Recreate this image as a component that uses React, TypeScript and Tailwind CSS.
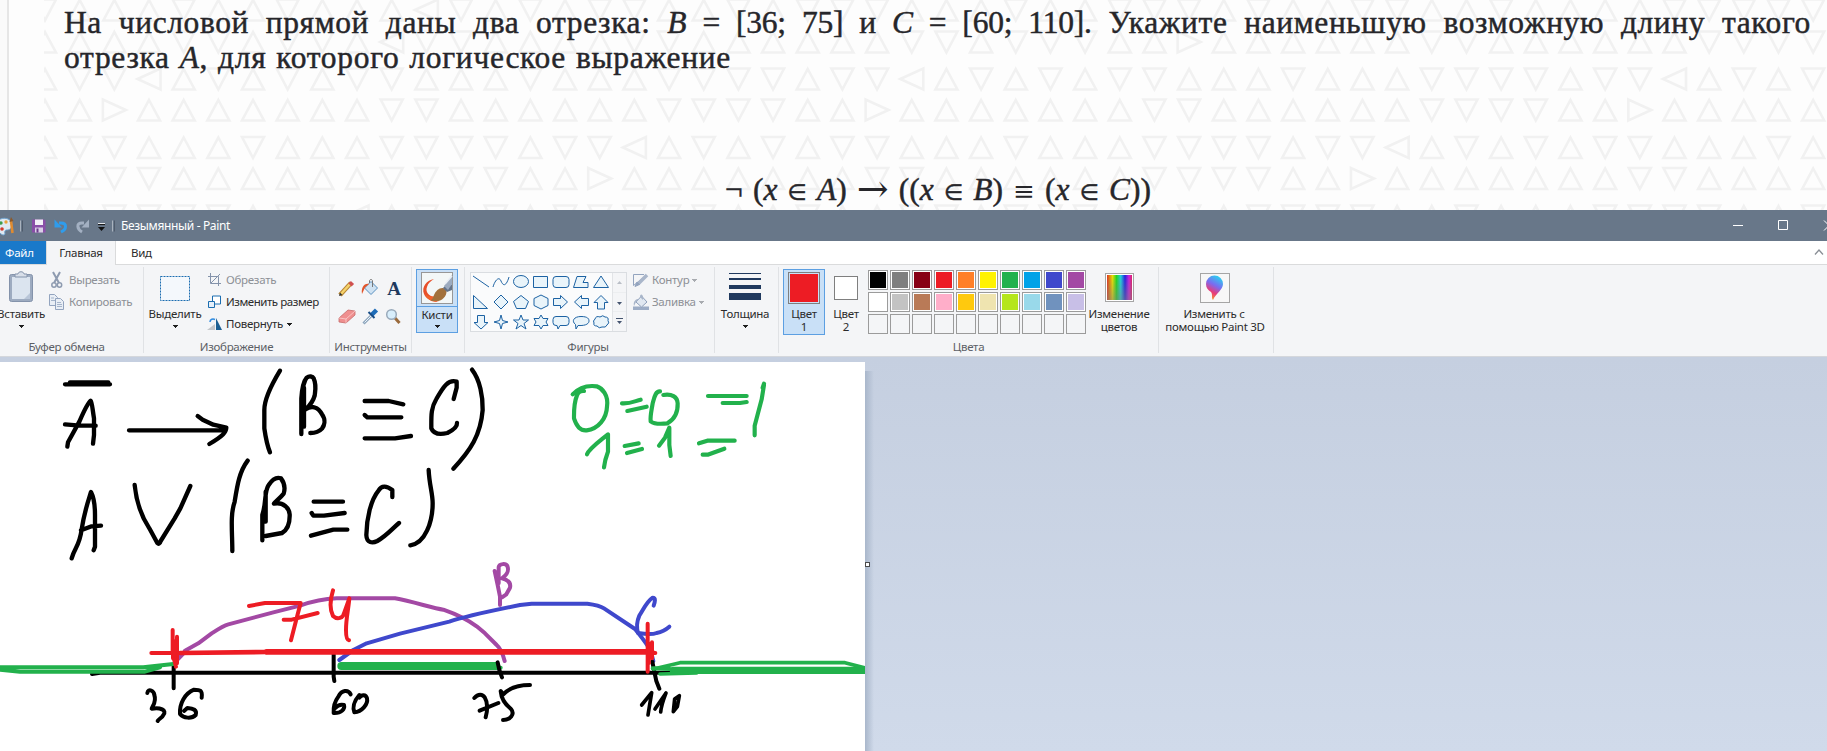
import React from 'react';

const ROWS: { y: number; cells: string }[] = [
  { y: 10, cells: 'duuuduuduuuldududd' + 'uududdduuuduuddd' + 'uduudduuduuuudddd'.slice(0, 17) + 'd' },
  { y: 42, cells: 'uuuuddudduldduuuu' + 'dduuuuuudduddduur' + 'uuuuuudduuuuuudddd' },
  { y: 79, cells: 'uddludududdduuduu'.replace('ddduuduu', 'dduuuduu') + 'udddduddludududdu' + 'uuduuudddduddludud' },
  { y: 110, cells: 'uuruuuuuuudduuuuu' + 'udddduuruuuuuuudd' + 'uuuuuudddduuruuuuu' },
  { y: 147.5, cells: 'udduuuduuuddddudd' + 'ludududduuuduuudd' + 'dduddludududduuudu' },
  { y: 178.5, cells: 'uudduuuuuudddduur' + 'uuuuuuudduuuuuudd' + 'dduuruuuuuuudduuuu' },
  { y: 216, cells: 'uudddduddludududd' + 'ddduuduudduddduud' + 'udddduuduuudddduud' },
];

const TRI: Record<string, string> = {
  u: 'M0 -10L11 10.5H-11Z',
  d: 'M0 10.5L11 -10.5H-11Z',
  l: 'M-11.5 0L11.5 -10.5V10.5Z',
  r: 'M11.5 0L-11.5 -10.5V10.5Z',
};

function Watermark() {
  return (
    <svg className="absolute left-[44px] top-0" width="1783" height="210" viewBox="44 0 1783 210">
      <g fill="none" stroke="#f1f1f1" strokeWidth="2.600">
        {ROWS.map((row) =>
          row.cells.split('').map((c, i) => (
            <path key={`${row.y}-${i}`} d={TRI[c]} transform={`translate(${45 + i * 34.67} ${row.y})`} />
          )),
        )}
      </g>
    </svg>
  );
}

function In() {
  return <span className="font-['DejaVu_Sans',sans-serif] text-[22px] leading-[0]">∈</span>;
}

function Task() {
  return (
    <section className="relative h-[210px] w-full overflow-hidden bg-[#fdfdfd]">
      <div className="absolute left-0 top-0 h-full w-[9px] border-r-2 border-[#e6e6e6] bg-[#fafafa]" />
      <Watermark />
      <div className="relative pl-[64px] pt-[6px] font-['Liberation_Serif',serif] text-[31.5px] leading-[34px] text-[#26262a] [-webkit-text-stroke:0.45px_#26262a]">
        <p className="w-[1747px] whitespace-nowrap tracking-[0.6px] [text-align-last:justify]">
          На числовой прямой даны два отрезка: <span className="tracking-[-0.2px]"><i>B</i> = [36; 75] и <i>C</i> = [60; 110].</span> Укажите наименьшую возможную длину такого
        </p>
        <p className="mt-px w-[667px] whitespace-nowrap tracking-[0.7px] [text-align-last:justify]">
          отрезка <i>A</i>, для которого логическое выражение
        </p>
        <p className="ml-[661px] mt-[98px] h-[34px] w-[426px] whitespace-nowrap [text-align-last:justify]">
          ¬ (<i>x</i> <In /> <i>A</i>) <span className="align-[-2px] font-['DejaVu_Serif',serif] text-[38px] leading-[0] [-webkit-text-stroke:0]">→</span> ((<i>x</i> <In /> <i>B</i>) <span className="font-['DejaVu_Serif',serif] text-[26px] leading-[0] [-webkit-text-stroke:0]">≡</span> (<i>x</i> <In /> <i>C</i>))
        </p>
      </div>
    </section>
  );
}

function TitleBar() {
  return (
    <header className="flex h-[31px] w-full bg-[#687789]">
      <svg width="117" height="31" viewBox="0 0 117 31">
        <path d="M-3 15C-3 9 3 7 8 9c4 2 5 6 3 9-2 3-5 1-6 3-1 2 1 3-1 4-4 0-7-5-7-10Z" fill="#dfe9f2" stroke="#6fa3cf" />
        <circle cx="1" cy="13" r="1.7" fill="#3e9c4a" />
        <circle cx="6" cy="12" r="1.7" fill="#e8a33b" />
        <circle cx="2" cy="19" r="1.8" fill="#d33b2c" />
        <path d="M11 11L12.5 23" stroke="#e08b30" strokeWidth="2.6" />
        <path d="M9.500 12L11 7l2.500 4Z" fill="#8d5a2a" />
        <path d="M20.500 10.500V21.500M112.500 10.500V21.500" stroke="#a9b2bd" />
        <path d="M22.500 10.500V21.500M114.500 10.500V21.500" stroke="#4f5b6b" />
        <path d="M32 9.500h12l1.500 1V22.500H32Z" fill="#8a4fa8" />
        <path d="M35 9.500h8v5.500h-8Z" fill="#f4f1f8" />
        <path d="M35 17.500h8v5h-8Z" fill="#d9cfe6" />
        <path d="M36.500 18.500h2v4h-2Z" fill="#6c3b8c" />
        <path d="M59 13h2c6 0 6 6 0 9" fill="none" stroke="#2f9ceb" strokeWidth="3" />
        <path d="M54.500 9.500V17.500H62Z" fill="#2f9ceb" />
        <path d="M84 13h-2c-6 0-5 6 0 9" fill="none" stroke="#a3b0c2" strokeWidth="3" />
        <path d="M89 9.500V17.500H81.500Z" fill="#a3b0c2" />
        <path d="M98 14.500h7" stroke="#1b1b1b" strokeWidth="1.200" />
        <path d="M98 13.500h7" stroke="#e4e7eb" />
        <path d="M98 17h7l-3.500 4Z" fill="#111" />
      </svg>
      <span className="ml-[4px] pt-[6px] text-[12px] leading-[20px] tracking-[-0.35px] text-white">Безымянный - Paint</span>
      <svg className="ml-auto" width="94" height="31" viewBox="1733 0 94 31" fill="none" stroke="#fff">
        <path d="M1733 15.500h10" />
        <path d="M1778.500 10.500h9v9h-9Z" />
        <path d="M1824 10.500l10 10M1824 20.500l10-10" />
      </svg>
    </header>
  );
}

function Tabs() {
  return (
    <nav className="relative flex h-[24px] w-full border-b border-[#dadbdc] bg-white text-[11.5px] leading-[24px] tracking-[-0.25px] text-[#2b2b2b]">
      <span className="h-[23px] w-[46px] bg-[#1979ca] pl-[5px] text-white">Файл</span>
      <span className="z-10 h-[24px] w-[70px] border-x border-[#dadbdc] bg-[#f4f5f7] text-center">Главная</span>
      <span className="pl-[15px]">Вид</span>
      <svg className="ml-auto mr-[3px] mt-[7px]" width="10" height="8" fill="none" stroke="#8a8f96" strokeWidth="1.300">
        <path d="M1 6.500L5 2L9 6.500" />
      </svg>
    </nav>
  );
}

function Group({ width, label, labelClass = '', children }: { width: string; label?: string; labelClass?: string; children?: React.ReactNode }) {
  return (
    <div className={`flex h-[91px] shrink-0 flex-col ${width}`}>
      <div className="flex h-[73px] w-full">{children}</div>
      <div className={`h-[18px] whitespace-nowrap text-center leading-[17px] text-[#5c5f66] ${labelClass}`}>{label}</div>
    </div>
  );
}

function Sep() {
  return <div className="mt-[2px] h-[86px] w-px shrink-0 bg-[#e0e2e5]" />;
}

function Arrow({ className = 'text-[#1f1f1f]' }: { className?: string }) {
  return (
    <svg className={className} width="5" height="3" shapeRendering="crispEdges">
      <path d="M0 0H5L2.500 3Z" fill="currentColor" />
    </svg>
  );
}

function Clipboard() {
  return (
    <div className="-ml-[4px] flex w-[50px] flex-col items-center">
      <svg className="mt-[6px]" width="26" height="32" viewBox="8 271 26 32">
        <rect x="9.500" y="274.500" width="23" height="27" rx="2" fill="#9dabc0" stroke="#8493ab" />
        <rect x="12" y="277" width="18" height="22" fill="#dbe4ef" />
        <path d="M24 299L30 293V299Z" fill="#b8c5d8" />
        <path d="M15 277v-3h3c0-3 6-3 6 0h3v3Z" fill="#d8dfe9" stroke="#8493ab" />
      </svg>
      <span className="mt-px leading-[20px]">Вставить</span>
      <span className="mt-px flex"><Arrow /></span>
    </div>
  );
}

function ClipGroup() {
  return (
    <Group width="w-[143px]" label="Буфер обмена" labelClass="pr-[10px]">
      <Clipboard />
      <div className="ml-[3px] mt-[4px] text-[#8d9096]">
        <div className="flex h-[22px] items-center gap-[4px]">
          <svg width="16" height="18" viewBox="50 270 16 18" fill="none" stroke="#8e9bb0" strokeWidth="1.500">
            <path d="M54 271L60 282M61 271L55 282" strokeWidth="2" />
            <circle cx="55" cy="284" r="2.200" />
            <circle cx="60.500" cy="284" r="2.200" />
          </svg>
          Вырезать
        </div>
        <div className="flex h-[22px] items-center gap-[4px]">
          <svg width="16" height="18" viewBox="50 293 16 18" fill="#e9eef5" stroke="#93a4bf">
            <path d="M50.500 294.500h5l3 3v8h-8Z" />
            <path d="M56.500 298.500h5l3 3v8h-8Z" />
            <path d="M52 298h3M52 300.500h4M58 302.500h4M58 304.500h5M58 306.500h5" strokeWidth=".8" />
          </svg>
          Копировать
        </div>
      </div>
    </Group>
  );
}

function ImageGroup() {
  return (
    <Group width="w-[185px]" label="Изображение">
      <div className="ml-[5px] flex w-[52px] flex-col items-center">
        <svg className="mt-[11px]" width="30" height="25">
          <rect x=".5" y=".5" width="29" height="24" fill="#f4f8fc" stroke="#1b6db0" strokeDasharray="2 1" />
        </svg>
        <span className="mt-[3px] leading-[20px]">Выделить</span>
        <span className="mt-px flex"><Arrow /></span>
      </div>
      <div className="ml-[6px] mt-[4px] whitespace-nowrap">
        <div className="flex h-[22px] items-center gap-[4px] text-[#8d9096]">
          <svg width="15" height="14" viewBox="0 0 15 14" fill="none" stroke="#8493ab">
            <path d="M3.500 0V10.500H14M1 3.500H11.500V13M4 10L13 1" />
          </svg>
          Обрезать
        </div>
        <div className="flex h-[22px] items-center gap-[4px] tracking-[-0.45px]">
          <svg width="15" height="14" viewBox="0 0 15 14" fill="#fff" stroke="#1b6db0">
            <path d="M5.500 1h8v8h-8Z" />
            <path d="M1.500 6.500h6v6h-6Z" fill="#e6f0fa" />
          </svg>
          Изменить размер
        </div>
        <div className="flex h-[22px] items-center gap-[4px]">
          <svg width="15" height="14" viewBox="0 0 15 14">
            <path d="M0 13L8 7V13Z" fill="#c3c6ca" />
            <path d="M9 1L15 13H9Z" fill="#1c5f92" />
            <path d="M3 5C3 2 6 1.500 8 2.500" fill="none" stroke="#2e8ae0" strokeWidth="1.500" />
          </svg>
          Повернуть <Arrow />
        </div>
      </div>
    </Group>
  );
}

function ToolsGroup() {
  return (
    <Group width="w-[81px]" label="Инструменты">
      <svg width="81" height="73" viewBox="330 265 81 73">
        <path d="M340 295L351 283" stroke="#b98532" strokeWidth="4.500" />
        <path d="M340.500 294.500L350.500 283.500" stroke="#f5d36c" strokeWidth="2.500" />
        <path d="M350 285L352.500 282.500" stroke="#d05050" strokeWidth="4.500" />
        <path d="M339 296l1-3.500 2.500 2.500Z" fill="#333" />
        <path d="M364.500 288L371 281.500L377.500 288L371 294.500Z" fill="#cfe2f2" stroke="#5a90c0" />
        <path d="M369.500 283v-2c0-2 3-2 3 0v6" fill="none" stroke="#777" />
        <path d="M362 294C361 288 364 283 369 284L365 287.500Z" fill="#e2552b" />
        <text x="387.200" y="295" className="font-['Liberation_Serif',serif] text-[19px] font-bold" fill="#20395e">A</text>
        <path d="M339 318L348 310L355 311L355 315L346 323L339 322Z" fill="#ef8f8f" stroke="#c76a6a" strokeWidth=".8" />
        <path d="M339 318L346 319L355 311M346 319V323" fill="none" stroke="#fbd0d0" strokeWidth=".8" />
        <path d="M363.500 323.500L371 316" stroke="#8ea6bd" strokeWidth="3" />
        <path d="M364.500 322.500L371 316" stroke="#eaf3fa" />
        <path d="M371.500 315L376.500 310" stroke="#1f6cb8" strokeWidth="4.500" />
        <path d="M368.500 312L374.500 318" stroke="#184d87" strokeWidth="2" />
        <path d="M395 318L399.500 323" stroke="#9a6a3c" strokeWidth="3" />
        <circle cx="391.500" cy="314.500" r="4.800" fill="#d8eefc" stroke="#98a9ba" strokeWidth="1.500" />
      </svg>
    </Group>
  );
}

function BrushGroup() {
  return (
    <Group width="w-[52px]">
      <div className="ml-[4px] mt-[4px] flex h-[64px] w-[42px] flex-col items-center border border-[#5c9fe2] bg-[#c9e0f7]">
        <div className="flex h-[37px] w-full justify-center border-b border-[#5c9fe2] pt-[2px]">
          <svg width="32" height="32" viewBox="0 0 32 32">
            <rect x=".5" y=".5" width="31" height="31" fill="#f3f7f7" stroke="#979797" />
            <path d="M13 7C6 8 0 15 3 22c2 5 7 7 13 8L13 25C8 24 4 20 6 15c1-4 4-6 7-8Z" fill="#e8502a" />
            <path d="M4 22C7 29 13 31 18 29L14 24C11 25 8 25 4 22Z" fill="#f0632b" />
            <path d="M13 23C15 18 20 14 25 17c2 5-2 11-8 12-5 0-8 0-7-1 2-1 2-3 3-5Z" fill="#a2713c" />
            <path d="M22 16L28 10L31 13V18L26 20Z" fill="#64748a" />
            <path d="M23 14L31 3V12L27 18Z" fill="#9cabbf" />
            <path d="M24 12L31 4" stroke="#e8eef5" strokeWidth="1.500" />
          </svg>
        </div>
        <span className="-mt-px leading-[18px]">Кисти</span>
        <span className="mt-px flex"><Arrow /></span>
      </div>
    </Group>
  );
}

const SHAPES = [
  'M2 3L18 14',
  'M2 14C4 7 8 3 10 8S15 14 18 4',
  'M2.500 8.500a7.500 6 0 1 0 15 0a7.500 6 0 1 0-15 0Z',
  'M2.500 3.500h14v11h-14Z',
  'M5 3.500h10q3 0 3 3v5q0 3-3 3H5q-3 0-3-3v-5q0-3 3-3Z',
  'M6 3.500H15L12 9.500H17V14.500H2.500Z',
  'M10 3L17.500 14.500H2.500Z',
  'M2.500 2.500L16.500 15.500H2.500Z',
  'M10 2L17 9L10 16L3 9Z',
  'M10 2.500L17.500 8.500L14.500 15.500H5.500L2.500 8.500Z',
  'M10 2L17 5.500V12.500L10 16L3 12.500V5.500Z',
  'M2.500 5.500h7V2.500L16.500 9L9.500 15.500v-3h-7Z',
  'M17.500 5.500h-7V2.500L3.500 9L10.500 15.500v-3h7Z',
  'M6.500 16V9.500H3L10 2.500L17 9.500H13.500V16Z',
  'M6.500 2.500V9.500H3L10 16L17 9.500H13.500V2.500Z',
  'M10 2L11.500 7.500L17 9L11.500 10.500L10 16L8.500 10.500L3 9L8.500 7.500Z',
  'M10 2L12 7H17.500L13 10.500L15 16L10 12.500L5 16L7 10.500L2.500 7H8Z',
  'M10 2L12 5.500H17L15 9L17 12.500H12L10 16L8 12.500H3L5 9L3 5.500H8Z',
  'M5 3.500h10q3 0 3 3v3q0 3-3 3H9L7 16L6 12.500H5q-3 0-3-3v-3q0-3 3-3Z',
  'M7 12.500L5 16L4.500 11.500C0 8 3 3.500 10 3.500S18 6 18 8S16 13 7 12.500Z',
  'M4 6Q5 2.500 9 4Q12 1.500 14 4Q18 4 17 7.500Q19 10 16 12Q15 15 11 14Q8 16 6 13Q2 13 3 10Q1.500 8 4 6Z',
];

function ShapesGroup() {
  return (
    <Group width="w-[249px]" label="Фигуры" labelClass="pr-[3px]">
      <div className="ml-[5px] mt-[7px] flex h-[60px] w-[157px] border border-[#dadde1] bg-[#fafbfc]">
        <svg width="141" height="58" viewBox="0 0 141 58">
          <g fill="#e9f4fa" stroke="#1c62a3">
            {SHAPES.map((d, i) => (
              <path key={d} d={d} fill={i < 2 ? 'none' : undefined} transform={`translate(${(i % 7) * 20} ${Math.floor(i / 7) * 20})`} />
            ))}
          </g>
        </svg>
        <svg className="border-l border-[#e2e4e7] bg-[#f4f5f7]" width="14" height="58">
          <path d="M4 11H9L6.500 8Z" fill="#b9bec6" />
          <path d="M4 29H9L6.500 32Z" fill="#44546f" />
          <path d="M0 19.500h14M0 38.500h14" stroke="#eceef0" />
          <path d="M3 45.500H10" stroke="#44546f" />
          <path d="M4 48H9L6.500 51Z" fill="#44546f" />
        </svg>
      </div>
      <div className="ml-[6px] mt-[4px] text-[#8d9096]">
        <div className="flex h-[22px] items-center gap-[3px]">
          <svg width="16" height="16" viewBox="0 0 16 16" fill="none" stroke="#93a4bf">
            <path d="M.5 13.500V2.500H11M.5 13.500L13 3.500" />
            <path d="M5 12L14 3" stroke="#a9b6ca" strokeWidth="3.500" />
            <path d="M2 14.500L4 10L6.500 12.500Z" fill="#93a4bf" />
          </svg>
          Контур <Arrow className="text-[#a8abb0]" />
        </div>
        <div className="flex h-[22px] items-center gap-[3px]">
          <svg width="16" height="16" viewBox="0 0 16 16">
            <path d="M0 12.500h16V16H0Z" fill="#9dadc6" />
            <path d="M3 8L8.500 2L14 8L8.500 13Z" fill="#e1e8f1" stroke="#8fa0bb" />
            <path d="M1 12C0 8 2 5 6 5L3 8ZM7 3c0-4 4-3 3 3" fill="#a9b6ca" />
          </svg>
          Заливка <Arrow className="text-[#a8abb0]" />
        </div>
      </div>
    </Group>
  );
}

function SizeGroup() {
  return (
    <Group width="w-[63px]">
      <div className="-ml-[3px] flex w-[66px] flex-col items-center">
        <svg className="mt-[8px]" width="32" height="28" fill="#20395e" shapeRendering="crispEdges">
          <path d="M0 0h32v1H0ZM0 5h32v2H0ZM0 12h32v4H0ZM0 20h32v7H0Z" />
        </svg>
        <span className="mt-[3px] leading-[20px]">Толщина</span>
        <span className="mt-px flex"><Arrow /></span>
      </div>
    </Group>
  );
}

const COLORS = [
  'bg-[#000000]', 'bg-[#7f7f7f]', 'bg-[#880015]', 'bg-[#ed1c24]', 'bg-[#ff7f27]', 'bg-[#fff200]', 'bg-[#22b14c]', 'bg-[#00a2e8]', 'bg-[#3f48cc]', 'bg-[#a349a4]',
  'bg-[#ffffff]', 'bg-[#c3c3c3]', 'bg-[#b97a57]', 'bg-[#ffaec9]', 'bg-[#ffc90e]', 'bg-[#efe4b0]', 'bg-[#b5e61d]', 'bg-[#99d9ea]', 'bg-[#7092be]', 'bg-[#c8bfe7]',
];

function ColorsGroup() {
  return (
    <Group width="w-[379px]" label="Цвета">
      <div className="ml-[4px] mt-[4px] flex h-[66px] w-[42px] flex-col items-center border border-[#5c9fe2] bg-[#c9e0f7] pt-[2px] leading-[13px]">
        <div className="mb-[3px] h-[32px] w-[32px] border border-[#7f7f7f] bg-[#c9e0f7] p-px"><div className="h-full w-full bg-[#ed1c24]" /></div>
        <span>Цвет</span>
        <span>1</span>
      </div>
      <div className="mt-[11px] flex w-[42px] flex-col items-center leading-[13px]">
        <div className="mb-[7px] h-[24px] w-[24px] border border-[#7f7f7f] bg-white" />
        <span>Цвет</span>
        <span>2</span>
      </div>
      <div className="ml-px mt-[5px] grid h-[64px] w-[218px] grid-cols-10 gap-[2px]">
        {Array.from({ length: 30 }, (_, i) => (
          <div key={i} className={`h-[20px] w-[20px] border border-[#9b9b9b] p-px ${i < 20 ? 'bg-white' : 'bg-[#f4f5f7]'}`}>
            <div className={`h-full w-full ${COLORS[i] ?? ''}`} />
          </div>
        ))}
      </div>
      <div className="ml-[2px] flex w-[62px] flex-col items-center whitespace-nowrap leading-[13px]">
        <div className="mb-[5px] mt-[8px] h-[29px] w-[29px] border border-[#a5a5a5] bg-white p-px">
          <div className="h-full w-full bg-[linear-gradient(0deg,#80808088,transparent),linear-gradient(90deg,#e03020,#e8e000_22%,#20d820_38%,#20d0e0_55%,#2020e0_72%,#d020e0_88%,#e02060)]" />
        </div>
        <span>Изменение</span>
        <span>цветов</span>
      </div>
    </Group>
  );
}

function Paint3DGroup() {
  return (
    <Group width="w-[114px]">
      <div className="flex w-full flex-col items-center whitespace-nowrap pt-[8px] text-center leading-[13px]">
        <svg className="mb-[4px] -ml-[3px]" width="30" height="30">
          <defs>
            <linearGradient id="pin" x1="0.700" y1="0" x2="0.300" y2="1">
              <stop offset="0" stopColor="#25d4f0" />
              <stop offset=".4" stopColor="#7a6cf0" />
              <stop offset=".7" stopColor="#ea3b78" />
              <stop offset="1" stopColor="#f8a623" />
            </linearGradient>
          </defs>
          <rect x=".5" y=".5" width="29" height="29" fill="#f7f7f7" stroke="#a5a5a5" />
          <path d="M6 11A8.500 8.500 0 0 1 23 11C23 17 16 20 13 27C11 25 13 22 11 19C8 17 6 15 6 11Z" fill="url(#pin)" />
        </svg>
        <span className="-ml-[4px]">Изменить с</span>
        <span className="-ml-[2px]">помощью Paint 3D</span>
      </div>
    </Group>
  );
}

function Ribbon() {
  return (
    <div className="flex h-[92px] w-full border-b border-[#d4d7dc] bg-[#f4f5f7] text-[11.5px] leading-[16px] tracking-[-0.28px] text-[#2b2b2b]">
      <ClipGroup /><Sep />
      <ImageGroup /><Sep />
      <ToolsGroup /><Sep />
      <BrushGroup /><Sep />
      <ShapesGroup /><Sep />
      <SizeGroup /><Sep />
      <ColorsGroup /><Sep />
      <Paint3DGroup /><Sep />
    </div>
  );
}

function Drawing() {
  return (
    <svg width="865" height="389" viewBox="0 362 865 389" fill="none" strokeLinecap="round" strokeLinejoin="round">
      <g transform="translate(0 355) scale(.33333)" stroke="#000" strokeWidth="13">
        <path d="M195 88H330M210 82H325" />
        <path d="M202 275L204 262L238 200C252 168 262 145 272 137C276 140 277 160 282 190V240L279 266M195 208L240 212H287" />
        <path d="M387 226H676M593 183L608 194L640 209L679 218C678 232 670 242 628 267" />
        <path d="M840 47C817 85 793 135 793 165V220C798 255 803 275 810 292" />
        <path d="M904 237V130C906 100 914 75 920 68C928 62 938 64 941 70C950 90 946 105 944 122C938 144 928 153 917 163C935 150 955 156 966 178C978 195 973 212 966 221C956 232 944 234 931 234M912 98V215" />
        <path d="M1094 138H1166L1210 148M1094 180L1102 187H1204M1094 250H1185L1233 243" />
        <path d="M1361 132L1370 98V80C1345 72 1330 95 1309 132C1292 160 1294 185 1294 220C1302 240 1325 238 1342 234C1358 226 1372 214 1371 204" />
        <path d="M1416 44C1440 75 1449 125 1448 165C1442 240 1412 285 1360 341" />
        <path d="M215 610C225 575 238 575 245 523C253 470 264 440 273 411C283 430 285 450 285 480V575L281 586M243 526L275 514L303 512" />
        <path d="M404 390C410 450 428 490 448 520L472 564Q478 570 482 558L524 490L541 460L571 393" />
        <path d="M743 317C718 350 712 390 704 440C690 480 697 530 697 588" />
        <path d="M787 556V480C800 440 792 410 806 390C819 370 832 366 843 370C852 382 856 400 851 416C840 430 828 438 822 446C850 440 868 460 869 478C870 508 862 525 846 534L797 543M797 410V500" />
        <path d="M941 440H1029M935 474L940 482H972L1034 474M933 542L1000 524H1042" />
        <path d="M1177 426V405C1160 393 1145 390 1136 406C1112 435 1100 490 1099 540C1100 565 1118 565 1132 558C1160 542 1178 520 1197 504" />
        <path d="M1286 345C1288 390 1298 415 1298 445C1298 500 1276 565 1231 571" />
      </g>
      <g transform="translate(440 355) scale(.33333)" stroke="#22b14c" strokeWidth="12.500">
        <path d="M432 108C422 107 415 109 411 121C401 145 402 165 402 190C410 215 422 228 440 226C475 222 500 190 501 155C506 120 487 100 470 94C440 90 415 100 398 118" />
        <path d="M546 145C570 147 585 138 602 134M562 168L620 155" />
        <path d="M660 109C645 108 643 130 638 145C634 170 630 185 632 199C645 209 665 207 682 205C705 192 714 172 713 145C712 125 695 116 670 120" />
        <path d="M804 123H920M848 144H900L920 141M972 86L968 98L972 90L965 133L944 212V241" />
        <path d="M441 298C448 280 480 258 504 238V290L496 315L492 337M554 273L596 265M561 294L606 282" />
        <path d="M657 272L675 248L688 218V270L692 303M777 265L802 257H884M788 299H803L853 281" />
      </g>
      <g transform="translate(0 555) scale(.33333)" strokeWidth="12">
        <path stroke="#000" d="M276 357L300 353H2030M521 330V400M1001 292V365L1003 378" />
        <path stroke="#a349a4" d="M534 312L550 296L555 287L595 265L635 235C655 222 670 212 685 208L820 172L900 152C940 138 965 132 1010 130H1185C1240 140 1300 160 1330 164C1370 178 1400 192 1430 214L1455 235L1490 270C1502 280 1508 295 1514 318" />
        <path stroke="#3f48cc" d="M1018 315L1060 285L1100 265L1200 236L1348 200C1400 182 1500 162 1560 150L1595 146H1762C1785 149 1800 152 1812 160L1905 222C1940 265 1955 285 1960 318" />
        <path stroke="#22b14c" d="M-10 337H430L485 331L520 327M-10 343L60 350H435L480 337" />
        <path stroke="#22b14c" strokeWidth="24" d="M1024 333H1488" />
        <path stroke="#22b14c" strokeWidth="12" d="M1490 338H1502" />
        <path stroke="#ed1c24" d="M454 294H540M518 225V294L528 335M531 245V325M519 290V310" />
        <path stroke="#ed1c24" d="M524 260V315" strokeWidth="14" />
        <path stroke="#ed1c24" strokeWidth="14" d="M540 294L800 291" />
        <path stroke="#ed1c24" strokeWidth="17" d="M800 290.500H1955" />
        <path stroke="#ed1c24" d="M747 153L795 144H902L893 178L873 256M851 194H875L953 174M999 106C990 135 990 165 999 183C1012 195 1030 190 1033 172L1048 130C1045 165 1038 190 1038 225C1038 245 1040 255 1047 256" />
        <path stroke="#000" d="M442 414C445 398 462 408 463 420C470 440 459 450 455 461C480 456 502 465 490 480C487 488 476 492 473 498" />
        <path stroke="#000" d="M605 428C608 405 600 404 582 404C555 415 538 445 540 477C550 490 575 492 587 480C592 465 580 460 562 459L552 468" />
        <path stroke="#000" d="M1052 418C1045 403 1025 404 1015 425C1000 445 1000 460 1001 474C1025 475 1035 462 1032 450C1020 447 1010 454 1005 460M1078 420C1060 440 1058 460 1063 472C1085 470 1105 448 1101 430C1098 418 1085 418 1078 428" />
      </g>
      <g transform="translate(430 555) scale(.33333)" strokeWidth="12">
        <path stroke="#a349a4" d="M194 48L203 90L210 125V150M206 85V36C208 25 228 25 232 33C238 48 232 58 216 70C235 75 243 85 240 98L229 118L216 127" />
        <path stroke="#3f48cc" d="M671 152C675 140 678 128 668 128C648 142 640 165 628 182C618 205 620 220 624 234C648 238 665 240 680 234C700 230 710 222 718 215" />
        <path stroke="#000" d="M203 322L208 345L216 367M667 320L673 350L679 378L688 401" />
        <path stroke="#22b14c" strokeWidth="22" d="M730 346H1310" />
        <path stroke="#22b14c" strokeWidth="11" d="M670 342L712 332L750 323H1245L1305 339M690 357L800 354" />
        <path stroke="#22b14c" strokeWidth="12" d="M668 340L720 342" />
        <path stroke="#ed1c24" d="M653 206V350M666 262V310M655 294H676" />
        <path stroke="#ed1c24" strokeWidth="9" d="M658 265V325" />
        <path stroke="#000" d="M133 429C145 415 158 418 164 427C175 445 173 465 167 487M149 467L205 444M300 390C262 390 235 402 220 418L212 408C214 435 228 450 243 462C256 478 240 495 219 495" />
        <path stroke="#000" strokeWidth="11" d="M635 450L665 413L654 480M675 462L708 414C700 435 694 450 692 471M734 432L748 422L742 455L730 470L734 432" />
      </g>
    </svg>
  );
}

function Workspace() {
  return (
    <main className="flex h-[394px] w-full bg-gradient-to-b from-[#c5cfe0] to-[#d0daea] pt-[5px]">
      <div className="h-[389px] w-[865px] shrink-0 bg-white"><Drawing /></div>
      <div className="relative mt-[9px] w-[9px] bg-gradient-to-r from-[#a9b7cb] to-transparent">
        <div className="absolute left-0 top-[191px] h-[5px] w-[5px] border border-[#4b4b4b] bg-white" />
      </div>
    </main>
  );
}

export default function App() {
  return (
    <div className="h-[751px] w-[1827px] overflow-hidden bg-white font-['Noto_Sans','Open_Sans',sans-serif]">
      <Task />
      <TitleBar />
      <Tabs />
      <Ribbon />
      <Workspace />
    </div>
  );
}
